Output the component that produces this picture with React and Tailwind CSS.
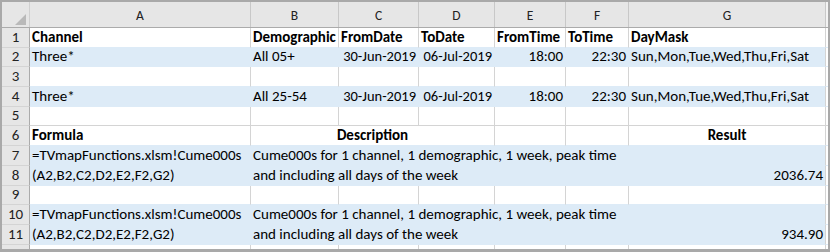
import React from "react";

const FONT = { fontFamily: "Carlito, Lato, 'Liberation Sans', sans-serif" };
const COL_W = ["w-[221px]", "w-[88px]", "w-[80px]", "w-[76px]", "w-[71px]", "w-[63px]", "w-[197px]"];
const LETTERS = ["A", "B", "C", "D", "E", "F", "G"];

const rows = [
  { n: 1, cells: ["Channel", "Demographic", "FromDate", "ToDate", "FromTime", "ToTime", "DayMask"], bold: true, next: "blue" },
  { n: 2, blue: true, cells: ["Three*", "All 05+", "30-Jun-2019", "06-Jul-2019", "18:00", "22:30", "Sun,Mon,Tue,Wed,Thu,Fri,Sat"] },
  { n: 3, cells: ["", "", "", "", "", "", ""], next: "blue" },
  { n: 4, blue: true, cells: ["Three*", "All 25-54", "30-Jun-2019", "06-Jul-2019", "18:00", "22:30", "Sun,Mon,Tue,Wed,Thu,Fri,Sat"] },
  { n: 5, cells: ["", "", "", "", "", "", ""] },
];

// numbers, dates and times sit on the right like in Excel
const RIGHT = [false, false, true, true, true, true, false];
// the date columns are tight, Lato digits run a bit wider than Calibri
const DATE_COL = [false, false, true, true, false, false, false];

function RowHead({ n, className = "" }) {
  return (
    <div className={`w-[28px] shrink-0 flex items-end justify-center pb-[1px] bg-[#e6e6e6] border-r border-b border-r-[#ababab] border-b-[#d4d4d4] text-[15px] text-[#222] leading-[17px] ${className}`}>
      {n}
    </div>
  );
}

function DataRow({ row }) {
  const lineB = row.blue || row.next === "blue" ? "border-b-[#ddebf7]" : "border-b-[#d4d4d4]";
  return (
    <div className="flex h-[19.7px] shrink-0">
      <RowHead n={row.n} />
      {row.cells.map((c, i) => {
        const lineR = row.blue && i < 6 ? "border-r-[#ddebf7]" : "border-r-[#d4d4d4]";
        return (
          <div
            key={i}
            className={`${COL_W[i]} shrink-0 flex items-end border-r border-b ${lineR} ${lineB} ${row.blue ? "bg-[#ddebf7]" : ""} ${RIGHT[i] && !row.bold ? "justify-end pr-[2px]" : "pl-[2px]"} ${row.bold ? "font-bold" : ""} ${DATE_COL[i] && !row.bold ? "text-[14.5px]" : ""} whitespace-nowrap leading-[17px] pb-[1px] overflow-hidden`}
          >
            {c}
          </div>
        );
      })}
      <div className={`flex-1 border-b ${lineB}`} />
    </div>
  );
}

function FormulaRow({ n, a, b, result }) {
  return (
    <div className="flex h-[19.7px] shrink-0">
      <RowHead n={n} />
      <div className="w-[221px] shrink-0 flex items-end pl-[2px] pb-[1px] bg-[#ddebf7] border-b border-[#ddebf7] whitespace-nowrap leading-[17px]">
        {a}
      </div>
      <div className="w-[575px] shrink-0 flex items-end justify-between pl-[2px] pr-[2px] pb-[1px] bg-[#ddebf7] border-r border-b border-r-[#d4d4d4] border-b-[#ddebf7] whitespace-nowrap leading-[17px]">
        <span>{b}</span>
        <span>{result}</span>
      </div>
      <div className="flex-1 border-b border-[#ddebf7]" />
    </div>
  );
}

function HeadingRow() {
  return (
    <div className="flex h-[19.7px] shrink-0 font-bold">
      <RowHead n={6} className="font-normal" />
      <div className="w-[221px] shrink-0 flex items-end pl-[2px] pb-[1px] border-r border-b border-r-[#d4d4d4] border-b-[#ddebf7] leading-[17px]">Formula</div>
      <div className="w-[244px] shrink-0 flex items-end justify-center pb-[1px] border-r border-b border-r-[#d4d4d4] border-b-[#ddebf7] leading-[17px]">Description</div>
      <div className="w-[71px] shrink-0 border-r border-b border-r-[#d4d4d4] border-b-[#ddebf7]" />
      <div className="w-[63px] shrink-0 border-r border-b border-r-[#d4d4d4] border-b-[#ddebf7]" />
      <div className="w-[197px] shrink-0 flex items-end justify-center pb-[1px] border-r border-b border-r-[#d4d4d4] border-b-[#ddebf7] leading-[17px]">Result</div>
      <div className="flex-1 border-b border-[#ddebf7]" />
    </div>
  );
}

function EmptyRow({ n, next }) {
  return <DataRow row={{ n, cells: ["", "", "", "", "", "", ""], next }} />;
}

export default function App() {
  return (
    <div className="w-[830px] h-[252px] border-2 border-b-[3px] border-[#a9a9a9] bg-white flex flex-col overflow-hidden text-[15px] text-black" style={FONT}>
      <div className="flex h-[26px] shrink-0 bg-[#e6e6e6] border-b border-[#ababab]">
        <div className="w-[28px] shrink-0 flex items-end justify-end pr-[3px] pb-[2px] border-r border-[#d0d0d0]">
          <svg width="11" height="11" viewBox="0 0 11 11">
            <polygon points="11,0 11,11 0,11" fill="#b9b9b9" />
          </svg>
        </div>
        {LETTERS.map((l, i) => (
          <div key={l} className={`${COL_W[i]} shrink-0 flex items-center justify-center pt-[3px] border-r border-[#c8c8c8] text-[13.5px] text-[#222]`}>
            {l}
          </div>
        ))}
        <div className="flex-1 bg-[#f3f3f3]" />
      </div>
      {rows.map((r) => (
        <DataRow key={r.n} row={r} />
      ))}
      <HeadingRow />
      <FormulaRow n={7} a="=TVmapFunctions.xlsm!Cume000s" b="Cume000s for 1 channel, 1 demographic, 1 week, peak time" result="" />
      <FormulaRow n={8} a="(A2,B2,C2,D2,E2,F2,G2)" b="and including all days of the week" result="2036.74" />
      <EmptyRow n={9} next="blue" />
      <FormulaRow n={10} a="=TVmapFunctions.xlsm!Cume000s" b="Cume000s for 1 channel, 1 demographic, 1 week, peak time" result="" />
      <FormulaRow n={11} a="(A2,B2,C2,D2,E2,F2,G2)" b="and including all days of the week" result="934.90" />
      <div className="flex flex-1">
        <div className="w-[28px] shrink-0 bg-[#e6e6e6] border-r border-[#ababab]" />
        {COL_W.map((w, i) => (
          <div key={i} className={`${w} shrink-0 border-r border-[#d4d4d4]`} />
        ))}
      </div>
    </div>
  );
}
